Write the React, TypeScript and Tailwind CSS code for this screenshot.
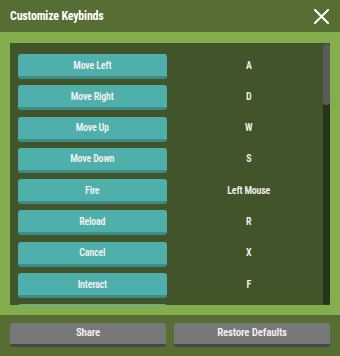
import React from "react";

const binds: [string, string][] = [
  ["Move Left", "A"],
  ["Move Right", "D"],
  ["Move Up", "W"],
  ["Move Down", "S"],
  ["Fire", "Left Mouse"],
  ["Reload", "R"],
  ["Cancel", "X"],
  ["Interact", "F"],
  ["", ""],
];

export default function App() {
  return (
    <div
      className="w-[340px] h-[356px] bg-[#566d33] flex flex-col overflow-hidden font-stretch-[75%]"
      style={{ fontFamily: "Roboto, 'Noto Sans', sans-serif" }}
    >
      <div className="h-[32px] shrink-0 px-[10px] flex items-center justify-between">
        <span className="text-white font-bold text-[12px] tracking-[-0.2px]">Customize Keybinds</span>
        <svg width="15" height="15" viewBox="0 0 15 15" className="mr-[1px]">
          <path d="M1 1 L14 14 M14 1 L1 14" stroke="#ffffff" strokeWidth="2" strokeLinecap="square" />
        </svg>
      </div>
      <div className="bg-[#84ad4e] px-[10px] pt-[11px] pb-[10px] h-[283px] shrink-0">
        <div className="bg-[#42552a] h-full flex overflow-hidden">
          <div className="flex-1 pl-[8px] pt-[11px] grid grid-cols-2 gap-x-[8px] gap-y-[6.3px] content-start overflow-hidden">
            {binds.map(([action, key], i) => (
              <React.Fragment key={i}>
                <div className="h-[25px] rounded-[3px] bg-[#4fafab] border-b-[3px] border-[#3d8c88] flex items-center justify-center text-[10px] font-semibold tracking-[-0.2px] text-[#f2f2f2]">
                  {action}
                </div>
                <div className="h-[25px] flex items-center justify-center text-[10px] font-semibold tracking-[-0.2px] text-[#f2f2f2] pb-[3px]">
                  {key}
                </div>
              </React.Fragment>
            ))}
          </div>
          <div className="w-[7px] shrink-0 pt-[1px] flex flex-col">
            <div className="flex-1 rounded-[3px] bg-[#27341a] flex flex-col">
              <div className="h-[61px] rounded-[3px] bg-[#5b5b5b]" />
            </div>
          </div>
        </div>
      </div>
      <div className="flex-1 px-[10px] pt-[8px] flex gap-[8px]">
        <div className="flex-1 h-[24px] rounded-[3px] bg-[#787878] border-b-[3px] border-[#474747] flex items-center justify-center text-[11px] font-semibold tracking-[-0.2px] text-[#f2f2f2]">
          Share
        </div>
        <div className="flex-1 h-[24px] rounded-[3px] bg-[#787878] border-b-[3px] border-[#474747] flex items-center justify-center text-[11px] font-semibold tracking-[-0.2px] text-[#f2f2f2]">
          Restore Defaults
        </div>
      </div>
    </div>
  );
}
